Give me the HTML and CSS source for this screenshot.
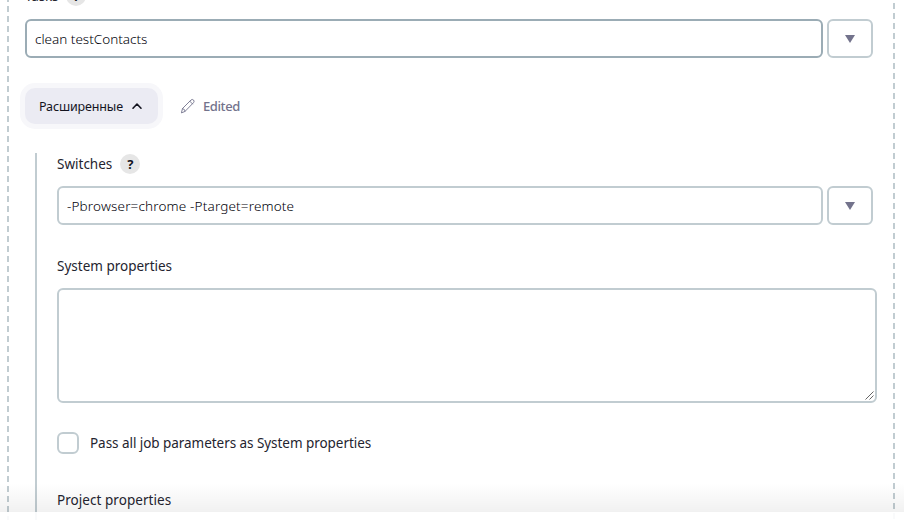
FILE: index.html
```html
<!DOCTYPE html>
<html lang="ru">
<head>
<meta charset="utf-8">
<title>Gradle</title>
<link rel="stylesheet" href="styles.css">
</head>
<body>
<main class="step">
  <div class="label tasks-label"><span class="t-tasks">Tasks</span><span class="help">?</span></div>
  <div class="row">
    <div class="input active"><span class="t-clean">clean testContacts</span></div>
    <div class="expand"><i class="arrow"></i></div>
  </div>
  <div class="advanced-row">
    <button class="advanced"><span class="t-adv">Расширенные</span>
      <svg width="12" height="8" viewBox="0 0 12 8"><path d="M2 6.2 6 2l4 4.2" fill="none" stroke="#14141f" stroke-width="1.6" stroke-linecap="round" stroke-linejoin="round"/></svg>
    </button>
    <svg class="pencil" width="16" height="16" viewBox="0 0 16 16"><path d="M1.5 14.5l1-4L11 2q1.3-1.1 2.5 0t0 2.7L5.2 13.2zM9.8 3.2l2.7 2.7M2.5 10.5q2.3.3 2.7 2.7" fill="none" stroke="#73738c" stroke-width=".9" stroke-linejoin="round" stroke-linecap="round"/></svg>
    <span class="edited">Edited</span>
  </div>
  <section class="nested">
    <div class="label"><span class="t-switches">Switches</span><span class="help">?</span></div>
    <div class="row switches">
      <div class="input"><span class="t-value">-Pbrowser=chrome -Ptarget=remote</span></div>
      <div class="expand"><i class="arrow"></i></div>
    </div>
    <div class="label system"><span class="t-system">System properties</span></div>
    <div class="textarea"><svg width="9" height="9" viewBox="0 0 9 9"><path d="M.5 8.5l8-8M4.5 8.5l4-4" fill="none" stroke="#555" stroke-width=".9"/></svg></div>
    <div class="check"><span class="box"></span><span class="t-pass">Pass all job parameters as System properties</span></div>
    <div class="label project"><span class="t-project">Project properties</span></div>
  </section>
</main>
<div class="shade"></div>
<footer class="bar"></footer>
</body>
</html>
```
FILE: styles.css
```css
* { box-sizing: border-box; }
html, body { margin: 0; height: 520px; overflow: hidden; background: #fff; }
body { position: relative; font: 450 13.5px/20px "Noto Sans", "Open Sans", sans-serif; color: #24242f; }
span { white-space: nowrap; }
.step {
  display: flow-root; height: 520px; margin: 0 9px 0 7px; padding: 0 0 0 18px;
  background:
    repeating-linear-gradient(#c1ccd1 0 6px, transparent 6px 10px) 0 -4px / 2px 530px no-repeat,
    repeating-linear-gradient(#c1ccd1 0 6px, transparent 6px 10px) 100% -7px / 2px 530px no-repeat;
}
.label { display: flex; align-items: center; height: 20px; gap: 8px; }
.tasks-label { margin-top: -14px; }
.t-tasks { letter-spacing: -.15px; }
.help { width: 20px; height: 20px; border-radius: 50%; background: #e6e6e6; text-align: center; font-weight: 700; font-size: 13px; line-height: 20px; color: #14141f; }
.row { display: flex; gap: 4px; margin-top: 13px; }
.input { width: 798px; height: 39px; border: 2px solid #c1ccd1; border-radius: 6px; padding: 0 8px; font-weight: 350; line-height: 37px; color: #000008; }
.active { border-color: #9bacb5; }
.expand { width: 46px; height: 39px; border: 2px solid #c1ccd1; border-radius: 6px; display: flex; align-items: center; justify-content: center; padding-right: 1px; }
.arrow { border: 5px solid transparent; border-top: 8px solid #73738c; border-bottom: 0; }
.t-clean { letter-spacing: 0; }
.t-value { letter-spacing: .16px; }
.advanced-row { display: flex; align-items: center; height: 36px; margin-top: 30px; }
.advanced { width: 133px; height: 36px; border: 0; border-radius: 10px; background: #ebebf3; box-shadow: 0 0 0 5px #f7f7fa; padding: 0 15px 0 14px; display: flex; align-items: center; justify-content: space-between; font: inherit; font-size: 12.5px; color: #14141f; }
.t-adv { letter-spacing: -.15px; padding-top: 1px; }
.pencil { margin-left: 22px; }
.edited { margin-left: 7px; color: #73738c; font-size: 13px; letter-spacing: -.4px; font-weight: 500; }
.nested { margin: 29px 0 0 10px; height: 380px; border-left: 2px solid #c1ccd1; padding: 1px 0 0 20px; }
.switches { margin-top: 12px; }
.switches .input { width: 766px; }
.system { margin-top: 31px; }
.textarea { width: 820px; height: 115px; margin-top: 12px; border: 2px solid #c1ccd1; border-radius: 6px; display: flex; align-items: flex-end; justify-content: flex-end; padding: 0 1px 1px 0; }
.check { display: flex; align-items: center; gap: 11px; height: 22px; margin-top: 29px; }
.t-pass { letter-spacing: -.05px; }
.t-project { letter-spacing: .05px; }
.box { width: 22px; height: 22px; border: 2px solid #c1ccd1; border-radius: 6px; }
.project { margin-top: 36px; }
.shade { position: absolute; left: 0; right: 0; top: 483px; height: 29px; background: linear-gradient(rgba(0,0,0,0), rgba(0,0,0,.055)); }
.bar { position: absolute; left: 0; right: 0; top: 512px; height: 8px; background: rgba(255,255,255,.9); }
```
